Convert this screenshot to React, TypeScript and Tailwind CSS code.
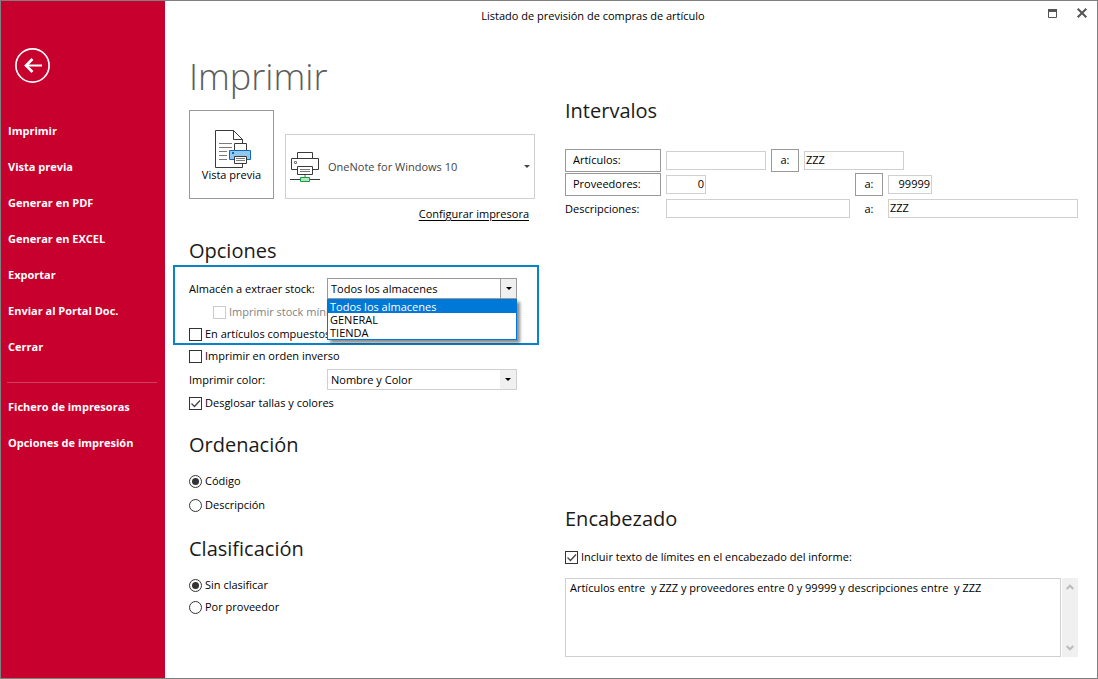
import React, { useState } from 'react';

const menuItems = [
  'Imprimir',
  'Vista previa',
  'Generar en PDF',
  'Generar en EXCEL',
  'Exportar',
  'Enviar al Portal Doc.',
  'Cerrar',
];

const configItems = ['Fichero de impresoras', 'Opciones de impresión'];

const warehouses = ['Todos los almacenes', 'GENERAL', 'TIENDA'];

const PreviewIcon = () => (
  <svg width="37" height="38" viewBox="-2 0 37 38" fill="none" aria-hidden="true" className="overflow-visible">
    <path d="M.5.5h18l9 9v28H.5z" fill="#fff" stroke="#3a3a3a" />
    <path d="M18.5.5v9h9" stroke="#3a3a3a" />
    <path d="M4 13.5h13M4 17.5h13M4 21.5h8M4 25.5h8M4 29.5h8" stroke="#7a7a7a" />
    <path d="M19.5 13.5h12v8h-12z" fill="#fff" stroke="#3a3a3a" />
    <path d="M14.5 20.5h21v9h-21z" fill="#92c8ef" stroke="#1068b8" />
    <path d="M17 22h2v2h-2z" fill="#1068b8" />
    <path d="M19.5 26.5h12v7h-12z" fill="#fff" stroke="#3a3a3a" />
    <path d="M21 28.5h9M21 30.5h9" stroke="#7a7a7a" />
  </svg>
);

const PrinterIcon = () => (
  <svg width="30" height="30" viewBox="0 0 30 30" fill="none" aria-hidden="true" className="shrink-0">
    <path d="M7.5.5h15v6h-15z" fill="#fff" stroke="#3a3a3a" />
    <path d="M1.500 6.500h27v11h-27z" fill="#fff" stroke="#3a3a3a" />
    <path d="M4.500 9.500h2v2h-2z" stroke="#7a7a7a" />
    <path d="M7.500 14.500h15v8h-15z" fill="#fff" stroke="#3a3a3a" />
    <path d="M10 17.500h10M10 19.500h10" stroke="#7a7a7a" />
    <path d="M15 23v2" stroke="#b0b0b0" strokeWidth="2" />
    <path d="M0 27.500h10M20 27.500h10" stroke="#3a3a3a" />
    <path d="M10.500 25.500h9v4h-9z" fill="#b5e6c1" stroke="#12a03c" />
  </svg>
);

const Caret = () => (
  <svg width="6" height="3" viewBox="0 0 6 3" aria-hidden="true">
    <path d="M0 0h6L3 3z" fill="currentColor" />
  </svg>
);

const Heading = ({ children, className = '' }: { children: React.ReactNode; className?: string }) => (
  <h2 className={`text-[20px] leading-7 text-[#1a1a1a] ${className}`}>{children}</h2>
);

interface CheckProps {
  label: string;
  defaultChecked?: boolean;
  disabled?: boolean;
  className?: string;
}

const Check = ({ label, defaultChecked, disabled, className = '' }: CheckProps) => (
  <label className={`flex h-[18px] items-center gap-[3px] whitespace-nowrap ${disabled ? 'text-[#838383]' : ''} ${className}`}>
    <span className="grid shrink-0">
      <input
        type="checkbox"
        defaultChecked={defaultChecked}
        disabled={disabled}
        className="peer col-start-1 row-start-1 size-[13px] appearance-none border border-[#333] bg-white disabled:border-[#ccc]"
      />
      <svg
        viewBox="0 0 13 13"
        fill="none"
        className="pointer-events-none invisible col-start-1 row-start-1 size-[13px] peer-checked:visible"
      >
        <path d="M2.500 6.500l3 3 5.500-6" stroke="#444" strokeWidth="1.300" />
      </svg>
    </span>
    {label}
  </label>
);

const Radio = ({ name, label, defaultChecked }: { name: string; label: string; defaultChecked?: boolean }) => (
  <label className="flex h-[18px] items-center gap-[3px]">
    <span className="grid shrink-0 place-items-center">
      <input
        type="radio"
        name={name}
        defaultChecked={defaultChecked}
        className="peer col-start-1 row-start-1 size-[13px] appearance-none rounded-full border border-[#333] bg-white"
      />
      <span className="pointer-events-none invisible col-start-1 row-start-1 size-[7px] rounded-full bg-[#333] peer-checked:visible" />
    </span>
    {label}
  </label>
);

const fieldClass = 'h-[19px] min-w-0 border border-[#d0d0d0] bg-white px-px pb-0.5 outline-none';
const buttonClass = 'h-[23px] border border-[#999] bg-white';

const App: React.FC = () => {
  const [warehouse, setWarehouse] = useState(warehouses[0]);

  return (
    <div className="flex min-h-screen border border-[#7f7f7f] bg-white font-['Open_Sans','Noto_Sans',sans-serif] text-[11px] leading-[18px] text-black">
      <aside className="w-[164px] shrink-0 bg-[#c8002d] pt-[47px] font-bold text-white">
        <button aria-label="Volver" className="ml-[14px] block">
          <svg width="35" height="35" viewBox="0 0 35 35" fill="none" stroke="#fff">
            <circle cx="17.500" cy="17.500" r="16.600" strokeWidth="1.700" />
            <path d="M10 17.500h17" strokeWidth="2" />
            <path d="M17.500 11l-6.500 6.500 6.500 6.500" strokeWidth="2.600" />
          </svg>
        </button>
        <nav className="mt-[30px]">
          {menuItems.map((item) => (
            <a key={item} href="#" className="flex h-9 items-center pl-[7px]">
              {item}
            </a>
          ))}
          <hr className="mt-[17px] mr-2 mb-1.5 ml-1.5 border-[#d13f5f]" />
          {configItems.map((item) => (
            <a key={item} href="#" className="flex h-9 items-center pl-[7px]">
              {item}
            </a>
          ))}
        </nav>
      </aside>

      <div className="flex min-w-0 flex-1 flex-col">
        <header className="grid h-[30px] grid-cols-[1fr_auto_1fr] items-center">
          <div />
          <p className="-ml-[76px]">Listado de previsión de compras de artículo</p>
          <div className="flex items-center justify-end gap-5 pr-2.5 pb-1.5">
            <button aria-label="Maximizar">
              <svg width="9" height="9" viewBox="0 0 9 9" fill="none">
                <path d="M.5.5h8v8h-8z" stroke="#555" />
                <path d="M0 0h9v3H0z" fill="#555" />
              </svg>
            </button>
            <button aria-label="Cerrar ventana">
              <svg width="10" height="10" viewBox="0 0 10 10" fill="none">
                <path d="M.7.7l8.600 8.600M9.300.7L.7 9.300" stroke="#555" strokeWidth="2" />
              </svg>
            </button>
          </div>
        </header>

        <main className="grid flex-1 grid-cols-[346px_minmax(0,1fr)] gap-x-[30px] pr-[19px] pb-[21px] pl-6">
          <div className="pt-[22px]">
            <h1 className="text-[36px] leading-[48px] font-light text-[#5c5c5c]">Imprimir</h1>

            <div className="mt-[9px] flex items-end gap-[11px]">
              <button className="flex h-[89px] w-[85px] shrink-0 flex-col items-center border border-[#999] pt-[19px]">
                <PreviewIcon />
                <span className="-mt-0.5">Vista previa</span>
              </button>
              <button className="flex h-[65px] flex-1 items-center gap-2 border border-[#d0d0d0] px-1 text-[#444]">
                <PrinterIcon />
                <span className="flex-1 text-left">OneNote for Windows 10</span>
                <Caret />
              </button>
            </div>
            <div className="mt-1.5 flex justify-end pr-1.5">
              <a href="#" className="underline underline-offset-2">
                Configurar impresora
              </a>
            </div>

            <Heading className="mt-3.5">Opciones</Heading>
            <div className="-mr-1 -ml-4 flex flex-col gap-1 border-2 border-[#0a84c9] pt-[11px] pl-3.5">
              <div className="flex items-center">
                <label htmlFor="almacen" className="w-[138px]">
                  Almacén a extraer stock:
                </label>
                <div className="relative w-[190px]">
                  <div className="grid items-center">
                    <select
                      id="almacen"
                      value={warehouse}
                      onChange={(e) => setWarehouse(e.target.value)}
                      className="col-start-1 row-start-1 h-[21px] w-full appearance-none border border-[#999] bg-white pl-[3px] outline-none"
                    >
                      {warehouses.map((w) => (
                        <option key={w}>{w}</option>
                      ))}
                    </select>
                    <span className="pointer-events-none col-start-1 row-start-1 flex h-[21px] w-[17px] items-center justify-center justify-self-end border border-[#999] bg-[#f0f0f0]">
                      <Caret />
                    </span>
                  </div>
                  {/* open list of warehouses */}
                  <ul
                    role="listbox"
                    className="absolute top-full left-0 z-10 w-full border border-[#0078d7] bg-white leading-[13px] shadow-[3px_3px_3px_rgba(0,0,0,0.45)]"
                  >
                    {warehouses.map((w) => (
                      <li
                        key={w}
                        role="option"
                        aria-selected={w === warehouse}
                        onClick={() => setWarehouse(w)}
                        className={`px-0.5 ${w === warehouse ? 'bg-[#0078d7] text-white' : ''}`}
                      >
                        {w}
                      </li>
                    ))}
                  </ul>
                </div>
              </div>
              <Check label="Imprimir stock míni" disabled className="ml-6" />
              <Check label="En artículos compuestos" />
            </div>
            <div className="mt-0.5 flex flex-col gap-1">
              <Check label="Imprimir en orden inverso" />
              <div className="flex items-center">
                <label htmlFor="color" className="w-[138px]">
                  Imprimir color:
                </label>
                <div className="grid w-[190px] items-center">
                  <select
                    id="color"
                    className="col-start-1 row-start-1 h-[21px] w-full appearance-none border border-[#d0d0d0] bg-white pl-[3px] outline-none"
                  >
                    <option>Nombre y Color</option>
                  </select>
                  <span className="pointer-events-none col-start-1 row-start-1 mr-px flex h-[19px] w-4 items-center justify-center justify-self-end bg-[#f0f0f0]">
                    <Caret />
                  </span>
                </div>
              </div>
              <Check label="Desglosar tallas y colores" defaultChecked />
            </div>

            <Heading className="mt-[19px]">Ordenación</Heading>
            <div className="mt-[13px] flex flex-col gap-1.5">
              <Radio name="orden" label="Código" defaultChecked />
              <Radio name="orden" label="Descripción" />
            </div>

            <Heading className="mt-[21px]">Clasificación</Heading>
            <div className="mt-[13px] flex flex-col gap-1">
              <Radio name="clasificacion" label="Sin clasificar" defaultChecked />
              <Radio name="clasificacion" label="Por proveedor" />
            </div>
          </div>

          <div className="flex flex-col pt-[66px]">
            <Heading>Intervalos</Heading>
            <div className="mt-[23px] flex h-6 items-center gap-[5px]">
              <button className={`${buttonClass} w-24 pl-[7px] text-left`}>Artículos:</button>
              <input aria-label="Artículo desde" className={`${fieldClass} w-[100px]`} />
              <button className={`${buttonClass} w-7`}>a:</button>
              <input aria-label="Artículo hasta" defaultValue="ZZZ" className={`${fieldClass} w-[100px]`} />
            </div>
            <div className="grid auto-rows-[24px] grid-cols-[96px_184px_28px_minmax(0,1fr)] items-center gap-x-[5px]">
              <button className={`${buttonClass} pl-[7px] text-left`}>Proveedores:</button>
              <input aria-label="Proveedor desde" defaultValue="0" className={`${fieldClass} w-10 text-right`} />
              <button className={buttonClass}>a:</button>
              <input aria-label="Proveedor hasta" defaultValue="99999" className={`${fieldClass} w-11 text-right`} />
              <label htmlFor="desc-desde" className="pt-0.5">
                Descripciones:
              </label>
              <input id="desc-desde" className={fieldClass} />
              <label htmlFor="desc-hasta" className="pt-0.5 text-center">
                a:
              </label>
              <input id="desc-hasta" defaultValue="ZZZ" className={fieldClass} />
            </div>

            <Heading className="mt-auto">Encabezado</Heading>
            <Check label="Incluir texto de límites en el encabezado del informe:" defaultChecked className="mt-[15px]" />
            <div className="mt-3 flex h-[79px] gap-px">
              <textarea
                aria-label="Texto del encabezado"
                defaultValue="Artículos entre  y ZZZ y proveedores entre 0 y 99999 y descripciones entre  y ZZZ"
                className="min-w-0 flex-1 resize-none overflow-hidden border border-[#d0d0d0] px-1 outline-none"
              />
              <div className="flex w-4 flex-col items-center justify-between bg-[#f0f0f0] py-1.5">
                <svg width="8" height="6" viewBox="0 0 8 6" fill="none">
                  <path d="M.7 5L4 1.700 7.300 5" stroke="#bbb" strokeWidth="2" />
                </svg>
                <svg width="8" height="6" viewBox="0 0 8 6" fill="none">
                  <path d="M.7 1L4 4.300 7.300 1" stroke="#bbb" strokeWidth="2" />
                </svg>
              </div>
            </div>
          </div>
        </main>
      </div>
    </div>
  );
};

export default App;
